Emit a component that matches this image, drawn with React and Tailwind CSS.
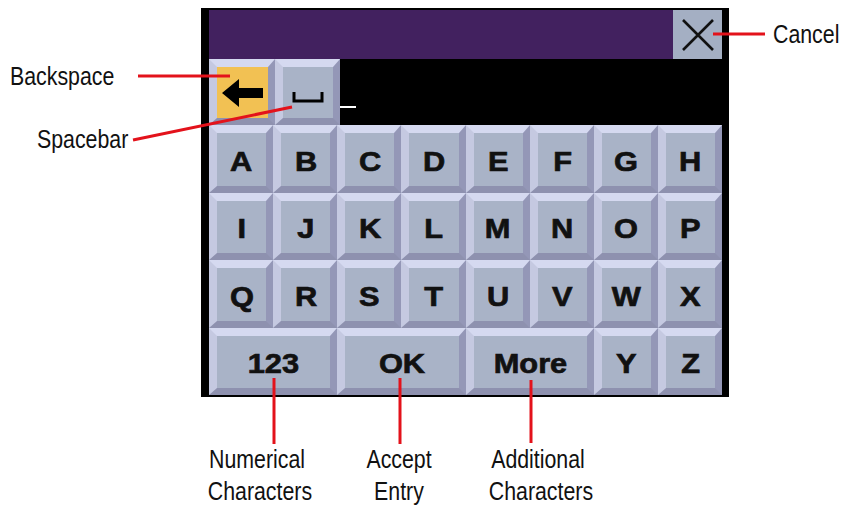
import React from 'react';

const LETTERS = [
  ['A', 'B', 'C', 'D', 'E', 'F', 'G', 'H'],
  ['I', 'J', 'K', 'L', 'M', 'N', 'O', 'P'],
  ['Q', 'R', 'S', 'T', 'U', 'V', 'W', 'X'],
];

const sans = { fontFamily: '"Liberation Sans", Arial, sans-serif' };

function Key({ children, yellow = false, className = '' }) {
  return (
    <div
      className={`flex items-center justify-center border-t-[8px] border-l-[8px] border-r-[7px] border-b-[7px] border-t-[#d5d9f0] border-l-[#c5c9e1] border-r-[#9497b7] border-b-[#8e91af] ${
        yellow ? 'bg-[#f2c153]' : 'bg-[#a9b3c7]'
      } ${className}`}
    >
      {children}
    </div>
  );
}

function KeyLabel({ children }) {
  return (
    <span
      className="mt-[5px] inline-block scale-x-[1.1] text-[28px] font-bold leading-none text-[#111] [-webkit-text-stroke:0.7px_#111]"
      style={sans}
    >
      {children}
    </span>
  );
}

// narrow caption text: Liberation Sans squeezed horizontally
function Callout({ className, children }) {
  return (
    <div
      className={`absolute whitespace-nowrap scale-x-[0.82] text-[26px] leading-[32px] text-[#111] ${className}`}
      style={sans}
    >
      {children}
    </div>
  );
}

export default function App() {
  return (
    <div className="relative w-[843px] h-[512px] overflow-hidden bg-white">
      {/* Device screen */}
      <div className="ml-[201px] pt-[8px]">
        <div className="w-[528px] border-l-[8px] border-t-[2px] border-r-[7px] border-b-[2px] border-black bg-black">
          {/* Title bar */}
          <div className="flex h-[49px] justify-end bg-[#42215f]">
            <div className="flex w-[49px] items-center justify-center bg-[#a4afc3]">
              <svg width="36" height="36" viewBox="0 0 36 36">
                <path d="M3 3 L33 33 M33 3 L3 33" stroke="#111" strokeWidth="2.6" fill="none" />
              </svg>
            </div>
          </div>

          {/* Entry row */}
          <div className="flex h-[66px]">
            <Key yellow className="w-[66px]">
              <svg width="42" height="32" viewBox="0 0 42 32">
                <polygon points="0,16 17,2 17,11 41,11 41,21 17,21 17,30" fill="#000" />
              </svg>
            </Key>
            <Key className="w-[65px]">
              <svg width="32" height="12" viewBox="0 0 32 12" className="mt-[8px]">
                <path d="M2 1 V10 H30 V1" stroke="#000" strokeWidth="3" fill="none" />
              </svg>
            </Key>
            <div className="flex flex-1 items-end bg-black pb-[17px]">
              <div className="h-[2px] w-[16px] bg-white" />
            </div>
          </div>

          {/* Keyboard */}
          <div className="grid h-[270px] grid-cols-8 grid-rows-4">
            {LETTERS.flat().map((l) => (
              <Key key={l}>
                <KeyLabel>{l}</KeyLabel>
              </Key>
            ))}
            <Key className="col-span-2">
              <KeyLabel>123</KeyLabel>
            </Key>
            <Key className="col-span-2">
              <KeyLabel>OK</KeyLabel>
            </Key>
            <Key className="col-span-2">
              <KeyLabel>More</KeyLabel>
            </Key>
            <Key>
              <KeyLabel>Y</KeyLabel>
            </Key>
            <Key>
              <KeyLabel>Z</KeyLabel>
            </Key>
          </div>
        </div>
      </div>

      {/* Callout lines */}
      <svg className="pointer-events-none absolute inset-0" width="843" height="512">
        <g stroke="#e3121b" strokeWidth="3" fill="none">
          <line x1="138" y1="76" x2="230" y2="76" />
          <line x1="133" y1="140" x2="292" y2="107" />
          <line x1="713" y1="34" x2="765" y2="34" />
          <line x1="274" y1="378" x2="274" y2="444" />
          <line x1="400" y1="378" x2="400" y2="444" />
          <line x1="531" y1="380" x2="531" y2="443" />
        </g>
      </svg>

      {/* Callout labels */}
      <Callout className="left-[10px] top-[60px] origin-left">Backspace</Callout>
      <Callout className="left-[37px] top-[123px] origin-left">Spacebar</Callout>
      <Callout className="left-[773px] top-[18px] origin-left">Cancel</Callout>
      <Callout className="left-[197px] top-[443px] w-[120px] text-center">
        Numerical
        <br />
        Characters
      </Callout>
      <Callout className="left-[339px] top-[443px] w-[120px] text-center">
        Accept
        <br />
        Entry
      </Callout>
      <Callout className="left-[478px] top-[443px] w-[120px] text-center">
        Additional
        <br />
        Characters
      </Callout>
    </div>
  );
}
